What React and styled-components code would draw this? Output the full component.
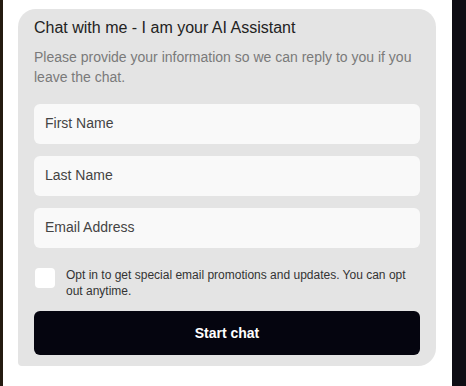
import React from 'react'
import styled, { createGlobalStyle } from 'styled-components'

const GlobalStyle = createGlobalStyle`
  html, body {
    margin: 0;
    padding: 0;
    background: #0e0d14;
  }
  * {
    box-sizing: border-box;
  }
`

const Page = styled.div`
  display: flex;
  height: 386px;
  width: 466px;
  font-family: 'Liberation Sans', Arial, sans-serif;
`

const Backdrop = styled.div`
  width: ${(p) => p.width}px;
  background: ${(p) => p.color};
`

const Panel = styled.div`
  flex: 1;
  background: #ffffff;
  padding: 9px 16px 20px 15px;
`

const Card = styled.form`
  display: flex;
  flex-direction: column;
  background: #e4e4e4;
  border-radius: 18px 18px 18px 4px;
  padding: 8px 16px 11px 16px;
`

const Title = styled.h2`
  margin: 0;
  font-size: 16px;
  line-height: 22px;
  font-weight: 400;
  color: #222;
`

const Intro = styled.p`
  margin: 8px 0 0;
  font-size: 14px;
  line-height: 20px;
  color: #7a7a7a;
`

const Fields = styled.div`
  display: flex;
  flex-direction: column;
  gap: 12px;
  margin-top: 17px;
`

const Input = styled.input`
  height: 40px;
  width: 100%;
  border: none;
  border-radius: 6px;
  background: #f9f9f9;
  padding: 0 11px 3px;
  font-family: inherit;
  font-size: 14px;
  color: #333;
  outline: none;
  &::placeholder {
    color: #444;
  }
`

const OptIn = styled.label`
  display: flex;
  align-items: flex-start;
  gap: 11px;
  margin-top: 19px;
  padding-left: 1px;
`

const Box = styled.input`
  appearance: none;
  flex: none;
  width: 20px;
  height: 20px;
  margin: 1px 0 0;
  border-radius: 4px;
  background: #ffffff;
`

const OptText = styled.span`
  font-size: 12px;
  line-height: 16px;
  color: #333;
`

const Button = styled.button`
  margin-top: 12px;
  height: 44px;
  border: none;
  border-radius: 6px;
  background: #05050f;
  color: #ffffff;
  font-family: inherit;
  font-size: 14px;
  font-weight: 700;
  cursor: pointer;
`

const fields = ['First Name', 'Last Name', 'Email Address']

export default function App() {
  return (
    <Page>
      <GlobalStyle />
      <Backdrop width={3} color="#241b10" />
      <Panel>
        <Card onSubmit={(e) => e.preventDefault()}>
          <Title>Chat with me - I am your AI Assistant</Title>
          <Intro>Please provide your information so we can reply to you if you leave the chat.</Intro>
          <Fields>
            {fields.map((f) => (
              <Input key={f} placeholder={f} />
            ))}
          </Fields>
          <OptIn>
            <Box type="checkbox" />
            <OptText>Opt in to get special email promotions and updates. You can opt out anytime.</OptText>
          </OptIn>
          <Button type="submit">Start chat</Button>
        </Card>
      </Panel>
      <Backdrop width={14} color="#0e0d14" />
    </Page>
  )
}
